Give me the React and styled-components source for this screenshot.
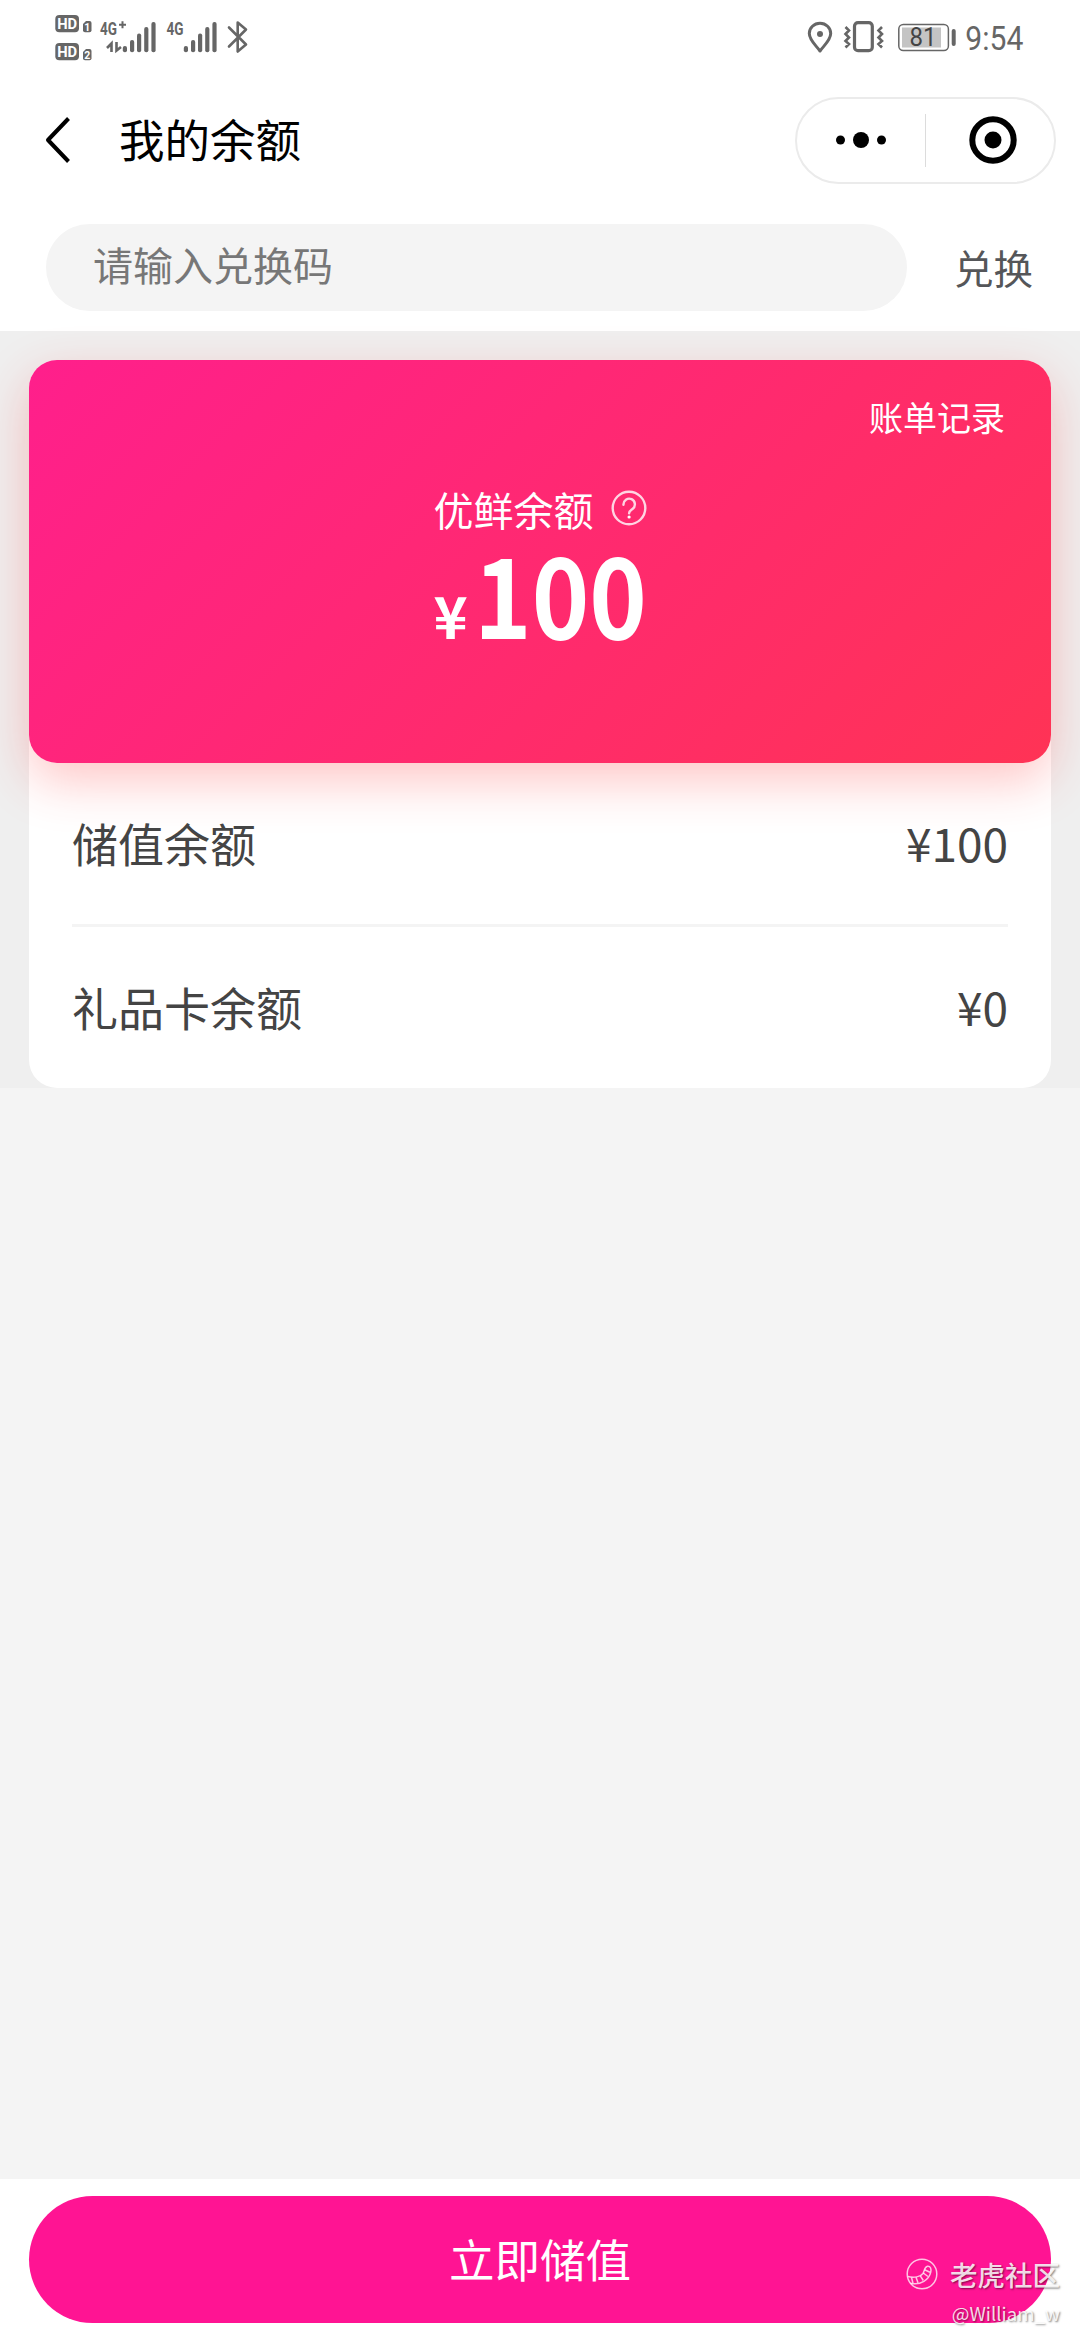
import styled, { createGlobalStyle } from 'styled-components'

const colors = {
  page: '#f4f4f4',
  section: '#efefef',
  pink: '#ff1493',
  text: '#444444',
  status: '#666666',
}

const fontFamily = '"Noto Sans CJK SC", sans-serif'

const GlobalStyle = createGlobalStyle`
  * { box-sizing: border-box; }
  body {
    margin: 0;
    background: ${colors.page};
    font-family: ${fontFamily};
  }
  button, input { font-family: inherit; }
`

const Screen = styled.div`
  display: flex;
  flex-direction: column;
  width: 1080px;
  height: 2340px;
  overflow: hidden;
  background: ${colors.page};
`

const Header = styled.header`
  height: 331px;
  background: #fff;
`

const StatusBar = styled.div`
  display: flex;
  justify-content: space-between;
  height: 75px;
  padding: 0 50px;
`

const NavBar = styled.nav`
  display: flex;
  align-items: center;
  height: 130px;
  padding: 0 24px 0 44px;
`

const BackButton = styled.button`
  display: flex;
  padding: 0;
  border: 0;
  background: none;
`

const Title = styled.h1`
  flex: 1;
  margin: 0 0 0 47px;
  padding-bottom: 4px;
  font-size: 45.5px;
  font-weight: 400;
  line-height: 60px;
  color: #000;
`

const Capsule = styled.div`
  display: flex;
  align-items: center;
  width: 261px;
  height: 87px;
  border: 2px solid #ebebeb;
  border-radius: 44px;
`

const CapsuleButton = styled.button`
  display: flex;
  flex: none;
  justify-content: center;
  width: 128px;
  padding: 0 0 0 ${(p) => p.$inset || 0}px;
  border: 0;
  background: none;
`

const CapsuleDivider = styled.span`
  width: 1px;
  height: 53px;
  background: #dcdcdc;
`

const RedeemBar = styled.div`
  display: flex;
  align-items: center;
  padding: 19px 47px 0 46px;
`

const CodeInput = styled.input`
  width: 861px;
  height: 87px;
  padding: 0 47px 8px;
  border: 0;
  border-radius: 44px;
  background: ${colors.page};
  font-size: 40px;
  outline: none;
  &::placeholder {
    color: #777;
    opacity: 1;
  }
`

const RedeemButton = styled.button`
  margin-left: auto;
  padding: 0 0 2px;
  border: 0;
  background: none;
  font-size: 39.5px;
  line-height: 60px;
  color: #555659;
`

const BalanceSection = styled.section`
  height: 757px;
  padding: 29px 29px 0;
  background: ${colors.section};
`

const BalancePanel = styled.div`
  height: 728px;
  border-radius: 28px;
  background: #fff;
`

const BalanceCard = styled.div`
  display: flex;
  flex-direction: column;
  align-items: center;
  height: 403px;
  border-radius: 28px;
  background: linear-gradient(135deg, #ff1f8c 0%, #ff3355 100%);
  box-shadow: 0 18px 50px rgba(255, 50, 50, 0.28);
  color: #fff;
`

const BillLink = styled.a`
  align-self: flex-end;
  margin: 32px 46px 0 0;
  font-size: 34px;
  line-height: 50px;
`

const CardLabel = styled.div`
  display: flex;
  align-items: center;
  gap: 17px;
  margin-top: 37px;
  font-size: 40px;
  line-height: 60px;
`

const Amount = styled.div`
  display: flex;
  align-items: baseline;
  gap: 6px;
  height: 100px;
  margin-top: 2px;
  line-height: 100px;
  font-weight: 700;
`

const Currency = styled.span`
  font-size: 58px;
`

// Condensed digits; the width is the one left after scaling
const AmountValue = styled.span`
  width: 173px;
  font-size: 111px;
  transform: scaleX(0.88);
  transform-origin: left;
`

const Row = styled.div`
  display: flex;
  align-items: center;
  justify-content: space-between;
  height: 161px;
  margin: 0 43px;
  padding-bottom: 4px;
  font-size: 46px;
  color: ${colors.text};
  & + & {
    height: 164px;
    border-top: 3px solid ${colors.page};
  }
`

const Footer = styled.footer`
  position: relative;
  height: 161px;
  margin-top: auto;
  padding: 17px 29px;
  background: #fff;
`

const TopUpButton = styled.button`
  width: 100%;
  height: 127px;
  padding: 0 0 3px;
  border: 0;
  border-radius: 64px;
  background: ${colors.pink};
  font-size: 45.5px;
  color: #fff;
`

// Sits over the button and the white footer alike
const Watermark = styled.div`
  position: absolute;
  right: 20px;
  bottom: 13px;
  display: flex;
  flex-direction: column;
  align-items: flex-end;
  color: rgba(255, 255, 255, 0.85);
  text-shadow: 1px 1px 2px rgba(0, 0, 0, 0.5);
`

const WatermarkBrand = styled.div`
  display: flex;
  align-items: center;
  gap: 12px;
  font-size: 27.5px;
  font-weight: 500;
  line-height: 42px;
`

const WatermarkUser = styled.div`
  margin-top: 4px;
  font-size: 18.7px;
  line-height: 28px;
`

const BARS = [
  [0, 46],
  [7.2, 40],
  [14.2, 33.5],
  [21.4, 27],
  [28.6, 22],
]

function SignalBars({ x }) {
  return BARS.map(([dx, top]) => (
    <rect key={dx} x={x + dx} y={top} width="4.2" height={52.3 - top} rx="2" fill={colors.status} />
  ))
}

function HdBadge({ y, sim }) {
  return (
    <g>
      <rect x="5.3" y={y} width="23.7" height="17.3" rx="4" fill={colors.status} />
      <text x="7.2" y={y + 13.8} fontSize="15" fontWeight="700" fill="#fff" textLength="20" lengthAdjust="spacingAndGlyphs">HD</text>
      <path d={`M36 ${y + 6}h3.5a2 2 0 0 1 2 2v7.3a2 2 0 0 1-2 2h-4.5a2 2 0 0 1-2-2v-6.3z`} fill={colors.status} />
      <text x="37.3" y={y + 15.6} fontSize="10.5" fontWeight="700" fill="#fff" textAnchor="middle">{sim}</text>
    </g>
  )
}

function NetworkStatus() {
  return (
    <svg width="210" height="75" fontFamily="Roboto, sans-serif">
      <HdBadge y={15} sim="1" />
      <HdBadge y={43} sim="2" />
      <g fill={colors.status} fontSize="18.5" fontWeight="700">
        <text x="50" y="35.3" textLength="17" lengthAdjust="spacingAndGlyphs">4G</text>
        <text x="116.5" y="35.3" textLength="17" lengthAdjust="spacingAndGlyphs">4G</text>
      </g>
      <path d="M69 24.7h7M72.5 21.2v7" stroke={colors.status} strokeWidth="2" />
      <path d="M61.5 52V43.5L57 48M66.5 42v8.5L71 47" fill="none" stroke={colors.status} strokeWidth="2.6" />
      <SignalBars x={72.8} />
      <SignalBars x={133.8} />
      <path d="M179 27.5l17 17-8.3 7V22.5l8.3 7-17 17" fill="none" stroke={colors.status} strokeWidth="2.6" strokeLinejoin="round" strokeLinecap="round" />
    </svg>
  )
}

function DeviceStatus() {
  return (
    <svg width="230" height="75" fontFamily="Roboto, sans-serif">
      <g fill="none" stroke={colors.status}>
        <path d="M20 51C16 45.5 9.3 40 9.3 33.5a10.7 10.2 0 0 1 21.4 0C30.7 40 24 45.5 20 51z" strokeWidth="3" strokeLinejoin="round" />
        <rect x="54.5" y="22.7" width="17.8" height="28" rx="3.5" strokeWidth="3.2" />
        <path d="M45.5 27l3.5 3.5-3.5 3.5 3.5 3.5-3.5 3.5 3.5 3-3.5 3.5M82 27l-3.5 3.5 3.5 3.5-3.5 3.5 3.5 3.5-3.5 3 3.5 3.5" strokeWidth="2.6" />
        <rect x="98.8" y="24.5" width="49.6" height="26" rx="4.5" strokeWidth="1.5" />
      </g>
      <circle cx="20" cy="34" r="3" fill={colors.status} />
      <rect x="102" y="27.5" width="39" height="20" fill="#c4c4c4" />
      <rect x="151.7" y="29" width="4" height="17" rx="2" fill={colors.status} />
      <text x="109.5" y="46" fontSize="25.5" fill="#444" textLength="27" lengthAdjust="spacingAndGlyphs">81</text>
      <text x="165.3" y="50" fontSize="33.5" fill={colors.status} textLength="58" lengthAdjust="spacingAndGlyphs">9:54</text>
    </svg>
  )
}

const HelpSvg = styled.svg`
  margin-top: -3px;
`

function HelpIcon() {
  return (
    <HelpSvg width="36" height="36" viewBox="0 0 36 36" fill="none" stroke="#fff" strokeOpacity="0.8" strokeWidth="2.4">
      <circle cx="18" cy="18" r="16.3" />
      <path d="M12.5 14.8a5.7 5.7 0 1 1 9 4.2c-2 1.5-3.4 2.2-3.4 4.3" strokeLinecap="round" />
      <circle cx="18.1" cy="27" r="1.6" fill="#fff" stroke="none" />
    </HelpSvg>
  )
}

function PawLogo() {
  return (
    <svg width="32" height="32" viewBox="0 0 32 32" fill="none" stroke="#fff" strokeOpacity="0.75" strokeWidth="1.5">
      <circle cx="16" cy="16" r="14.8" />
      <path d="M1.8 18.6C8 20 14.5 19 17 15.5c1.5-2.3 1.2-6.5 4.5-7.2 3.2-.3 4 3 3.2 6C23 21.5 15 27.5 4.5 25.2" />
      <path d="M5.5 19.5l1.5 5.7M10 19.3l2 5.5M14.3 17.8l3 4.7M17.3 15l4.7 3.5M18.5 11.8l5.5 2.5" />
    </svg>
  )
}

const balances = [
  { name: '储值余额', value: '¥100' },
  { name: '礼品卡余额', value: '¥0' },
]

export default function App() {
  return (
    <Screen>
      <GlobalStyle />
      <Header>
        <StatusBar>
          <NetworkStatus />
          <DeviceStatus />
        </StatusBar>
        <NavBar>
          <BackButton aria-label="返回">
            <svg width="28" height="48" viewBox="0 0 28 48" fill="none" stroke="#000" strokeWidth="4" strokeLinejoin="round">
              <path d="M24.5 2.5L4 24l20.5 21.5" />
            </svg>
          </BackButton>
          <Title>我的余额</Title>
          <Capsule>
            <CapsuleButton aria-label="更多">
              <svg width="50" height="18">
                <circle cx="4.5" cy="9" r="4.5" />
                <circle cx="25" cy="9" r="8" />
                <circle cx="45.5" cy="9" r="4.5" />
              </svg>
            </CapsuleButton>
            <CapsuleDivider />
            <CapsuleButton aria-label="关闭" $inset={6}>
              <svg width="48" height="48">
                <circle cx="24" cy="24" r="20.7" fill="none" stroke="#000" strokeWidth="6" />
                <circle cx="24" cy="24" r="8.5" />
              </svg>
            </CapsuleButton>
          </Capsule>
        </NavBar>
        <RedeemBar>
          <CodeInput placeholder="请输入兑换码" />
          <RedeemButton>兑换</RedeemButton>
        </RedeemBar>
      </Header>

      <BalanceSection>
        <BalancePanel>
          <BalanceCard>
            <BillLink>账单记录</BillLink>
            <CardLabel>
              优鲜余额
              <HelpIcon />
            </CardLabel>
            <Amount>
              <Currency>¥</Currency>
              <AmountValue>100</AmountValue>
            </Amount>
          </BalanceCard>
          {balances.map((item) => (
            <Row key={item.name}>
              <span>{item.name}</span>
              <span>{item.value}</span>
            </Row>
          ))}
        </BalancePanel>
      </BalanceSection>

      <Footer>
        <TopUpButton>立即储值</TopUpButton>
        <Watermark>
          <WatermarkBrand>
            <PawLogo />
            老虎社区
          </WatermarkBrand>
          <WatermarkUser>@William_w</WatermarkUser>
        </Watermark>
      </Footer>
    </Screen>
  )
}
